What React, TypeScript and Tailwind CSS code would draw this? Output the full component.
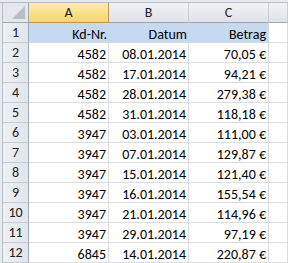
import React from 'react';

const rows: [string, string, string][] = [
  ['4582', '08.01.2014', '70,05 €'],
  ['4582', '17.01.2014', '94,21 €'],
  ['4582', '28.01.2014', '279,38 €'],
  ['4582', '31.01.2014', '118,18 €'],
  ['3947', '03.01.2014', '111,00 €'],
  ['3947', '07.01.2014', '129,87 €'],
  ['3947', '15.01.2014', '121,40 €'],
  ['3947', '16.01.2014', '155,54 €'],
  ['3947', '21.01.2014', '114,96 €'],
  ['3947', '29.01.2014', '97,19 €'],
  ['6845', '14.01.2014', '220,87 €'],
];

const font = { fontFamily: 'Calibri, Carlito, "Liberation Sans", sans-serif' };

const rowHead =
  'h-[20px] flex items-center justify-center border-r border-b border-r-[#9eaab8] border-b-[#c5cbd3] bg-gradient-to-r from-[#eef1f4] to-[#e1e5ea] text-[14px] text-[#222]';
const colHead =
  'h-[20px] flex items-center justify-center border-r border-b border-r-[#c8cdd4] border-b-[#9eaab8] bg-gradient-to-b from-[#f0f2f5] to-[#dfe3e8] text-[14px] text-[#222]';
const cell =
  'h-[20px] flex items-end justify-end pr-[2px] border-r border-b border-[#dadcdd] bg-white text-[14px] leading-[14px] text-black';
const blue =
  'h-[20px] flex items-end justify-end pr-[2px] border-b border-[#d3dbe4] bg-[#c5d9f1] text-[14px] leading-[14px] text-black';

export default function App() {
  return (
    <div className="w-[288px] h-[263px] overflow-hidden bg-white flex flex-col" style={font}>
      <div className="h-[3px] bg-[#e6e9ed] border-b border-[#b7bec6]" />
      <div className="flex flex-1">
        <div className="w-[3px] bg-[#e6e9ed] border-r border-[#b7bec6]" />
        <div className="grid grid-cols-[26px_80px_80px_80px_1fr] content-start flex-1">
          {/* header row */}
          <div className="h-[20px] relative border-r border-b border-r-[#9eaab8] border-b-[#9eaab8] bg-[#e4e7eb]">
            <svg className="absolute right-[3px] bottom-[3px]" width="13" height="13" viewBox="0 0 13 13">
              <polygon points="13,0 13,13 0,13" fill="#b9bec5" />
            </svg>
          </div>
          <div className="h-[20px] flex items-center justify-center border-r border-b border-r-[#c29a4b] border-b-[#c29a4b] bg-gradient-to-b from-[#fdedac] to-[#f8d46a] text-[14px] text-[#222]">
            A
          </div>
          <div className={colHead}>B</div>
          <div className={colHead}>C</div>
          <div className={colHead} />

          {/* row 1 */}
          <div className={rowHead}>1</div>
          <div className={blue}>Kd-Nr.</div>
          <div className={blue}>Datum</div>
          <div className={`${blue} border-r`}>Betrag</div>
          <div className={cell} />

          {rows.map((r, i) => (
            <React.Fragment key={i}>
              <div className={rowHead}>{i + 2}</div>
              <div className={cell}>{r[0]}</div>
              <div className={cell}>{r[1]}</div>
              <div className={cell}>{r[2]}</div>
              <div className={cell} />
            </React.Fragment>
          ))}
        </div>
      </div>
    </div>
  );
}
